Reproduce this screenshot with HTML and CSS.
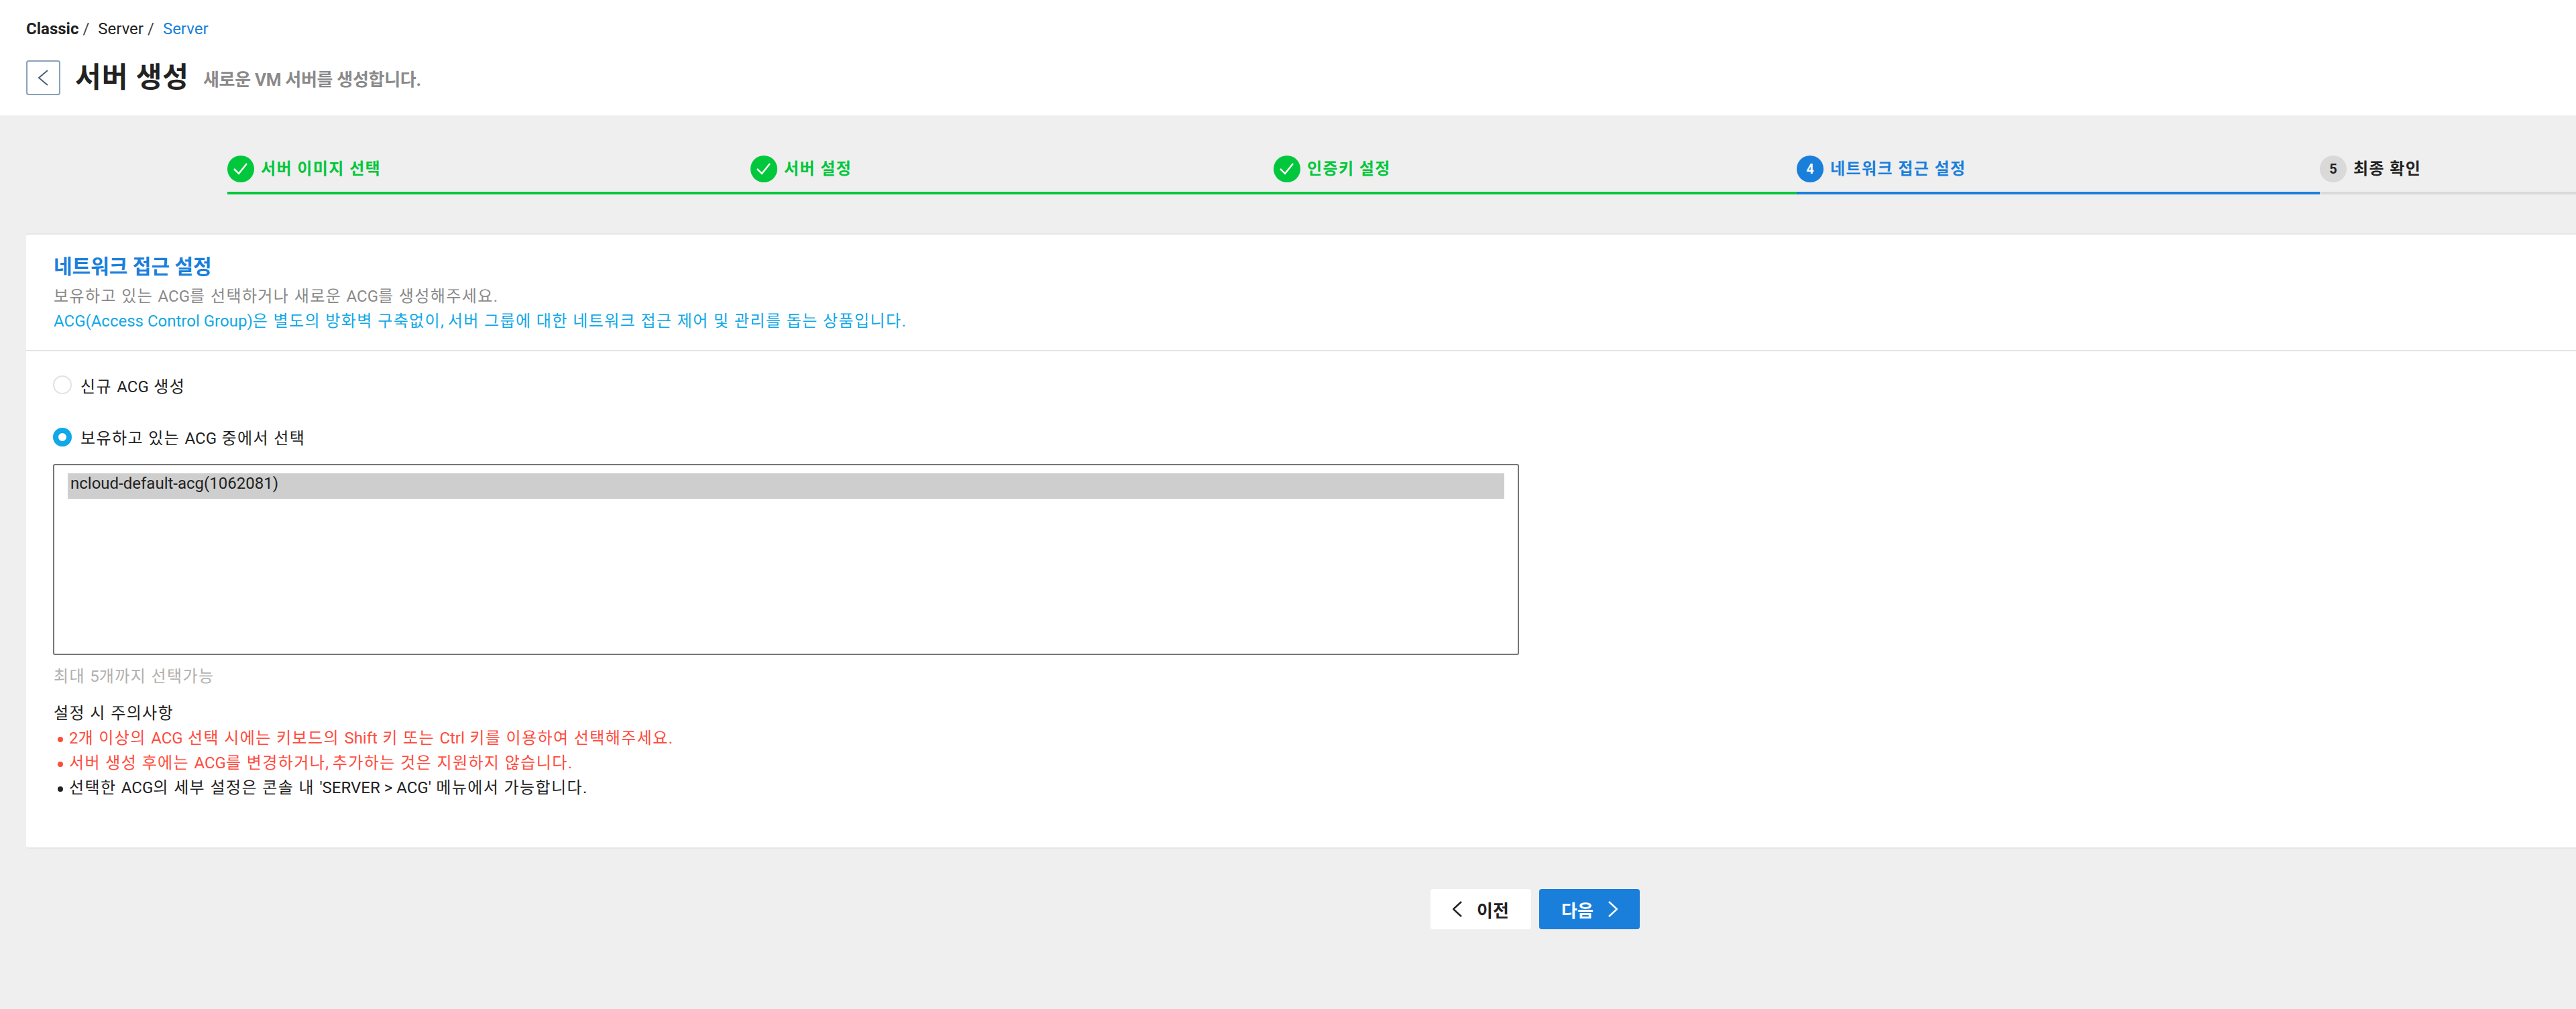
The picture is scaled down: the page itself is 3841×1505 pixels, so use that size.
FILE: index.html
```html
<!DOCTYPE html>
<html lang="ko">
<head>
<meta charset="utf-8">
<title>서버 생성</title>
<link rel="stylesheet" href="styles.css">
</head>
<body>
<header class="page-head">
  <nav class="crumbs">
    <span class="crumb crumb-root">Classic</span><span class="sep">/</span>
    <span class="crumb">Server</span><span class="sep">/</span>
    <span class="crumb crumb-now">Server</span>
  </nav>
  <div class="title-row">
    <button class="back" type="button" aria-label="뒤로">
      <svg width="16" height="24" viewBox="0 0 16 24"><path d="M14 1 1 12l13 11" class="chev-back"/></svg>
    </button>
    <h1 class="title">서버 생성</h1>
    <span class="subtitle">새로운 VM 서버를 생성합니다.</span>
  </div>
</header>
<main class="content">
  <ol class="steps">
    <li class="step step-done"><span class="dot"><svg width="22" height="18" viewBox="0 0 22 18"><path d="M1 9l7 7L20 1" class="tick"/></svg></span><span class="step-label">서버 이미지 선택</span></li>
    <li class="step step-done"><span class="dot"><svg width="22" height="18" viewBox="0 0 22 18"><path d="M1 9l7 7L20 1" class="tick"/></svg></span><span class="step-label">서버 설정</span></li>
    <li class="step step-done"><span class="dot"><svg width="22" height="18" viewBox="0 0 22 18"><path d="M1 9l7 7L20 1" class="tick"/></svg></span><span class="step-label">인증키 설정</span></li>
    <li class="step step-now"><span class="dot">4</span><span class="step-label">네트워크 접근 설정</span></li>
    <li class="step step-todo"><span class="dot">5</span><span class="step-label">최종 확인</span></li>
  </ol>
  <section class="card">
    <div class="card-head">
      <h2 class="card-title">네트워크 접근 설정</h2>
      <p class="card-desc"><span class="ko">보유하고 있는 </span>ACG<span class="ko">를 선택하거나 새로운 </span>ACG<span class="ko">를 생성해주세요</span>.</p>
      <p class="card-info">ACG(Access Control Group)<span class="ko">은 별도의 방화벽 구축없이</span>, <span class="ko">서버 그룹에 대한 네트워크 접근 제어 및 관리를 돕는 상품입니다</span>.</p>
    </div>
    <div class="card-body">
      <div class="radio-row"><span class="radio"></span><span><span class="ko">신규 </span>ACG<span class="ko"> 생성</span></span></div>
      <div class="radio-row"><span class="radio radio-on"></span><span class="radio-text"><span class="ko">보유하고 있는 </span>ACG<span class="ko"> 중에서 선택</span></span></div>
      <div class="listbox"><div class="option">ncloud-default-acg(1062081)</div></div>
      <p class="hint"><span class="ko">최대 </span>5<span class="ko">개까지 선택가능</span></p>
      <p class="notes-title"><span class="ko">설정 시 주의사항</span></p>
      <ul class="notes">
        <li class="note-red">2<span class="ko">개 이상의 </span>ACG<span class="ko"> 선택 시에는 키보드의 </span>Shift<span class="ko"> 키 또는 </span>Ctrl<span class="ko"> 키를 이용하여 선택해주세요</span>.</li>
        <li class="note-red"><span class="ko">서버 생성 후에는 </span>ACG<span class="ko">를 변경하거나</span>, <span class="ko">추가하는 것은 지원하지 않습니다</span>.</li>
        <li><span class="ko">선택한 </span>ACG<span class="ko">의 세부 설정은 콘솔 내 </span>'SERVER &gt; ACG'<span class="ko"> 메뉴에서 가능합니다</span>.</li>
      </ul>
    </div>
  </section>
  <div class="actions">
    <button class="btn btn-prev" type="button"><svg width="14" height="24" viewBox="0 0 14 24"><path d="M13 1 1 12l12 11"/></svg><span>이전</span></button>
    <button class="btn btn-next" type="button"><span>다음</span><svg width="14" height="24" viewBox="0 0 14 24"><path d="M1 1l12 11L1 23"/></svg></button>
  </div>
</main>
</body>
</html>
```
FILE: styles.css
```css
* { box-sizing: border-box; }
html, body { margin: 0; padding: 0; }
body {
  width: 3841px;
  height: 1505px;
  overflow: hidden;
  background: #efefef;
  color: #222;
  font-family: Roboto, "Noto Sans CJK KR", sans-serif;
  font-size: 24px;
}
h1, h2, p, ul, ol { margin: 0; padding: 0; }
li { list-style: none; }
.ko { letter-spacing: 1.4px; }

.page-head { height: 172px; background: #fff; padding: 28px 39px 0; }
.crumbs { display: flex; align-items: center; height: 30px; font-size: 24px; }
.crumb-root { font-weight: 700; }
.crumb-now { color: #1a7fdb; }
.sep { margin: 0 13px 0 6px; color: #444; }
.title-row { display: flex; align-items: center; margin-top: 32px; height: 52px; }
.back {
  display: flex; align-items: center; justify-content: center;
  width: 51px; height: 52px; padding: 0;
  background: #fff; border: 2px solid #8ba0b8; border-radius: 4px;
}
.chev-back { fill: none; stroke: #4f6075; stroke-width: 2; }
.title { margin-left: 22px; font-size: 42px; font-weight: 700; letter-spacing: 1px; line-height: 52px; color: #222; }
.subtitle { margin-left: 21px; font-size: 26px; font-weight: 700; letter-spacing: -.3px; color: #8a8a8a; padding-top: 1px; }

.steps { display: flex; margin: 60px 0 0 339px; height: 58px; }
.step { flex: 0 0 780px; display: flex; align-items: flex-start; gap: 10px; border-bottom: 4px solid #d9d9d9; height: 58px; font-weight: 700; font-size: 24px; }
.step:last-child { flex: 1 0 auto; }
.step-label { line-height: 40px; letter-spacing: 1.4px; }
.dot { flex: none; display: flex; align-items: center; justify-content: center; width: 40px; height: 40px; border-radius: 50%; font-size: 20px; background: #d9d9d9; }
.step-done { border-color: #00c73c; color: #00c73c; }
.step-done .dot { background: #00c73c; }
.tick { fill: none; stroke: #fff; stroke-width: 2.5; }
.step-now { border-color: #1a7fdb; color: #1a7fdb; }
.step-now .dot { background: #1a7fdb; color: #fff; }

.card { margin: 58px 0 0 39px; height: 918px; background: #fff; border-top: 2px solid #e6e6e6; border-bottom: 2px solid #e6e6e6; border-radius: 4px 0 0 4px; }
.card-head { height: 174px; padding: 27px 41px 0; border-bottom: 2px solid #e4e4e4; }
.card-title { font-size: 30px; font-weight: 700; color: #1a7fdb; line-height: 42px; }
.card-desc { margin-top: 5px; font-size: 24px; line-height: 37px; color: #8a8a8a; }
.card-info { font-size: 24px; line-height: 36px; color: #10a8e8; }
.card-body { padding: 36px 40px 0; }
.radio-row { display: flex; align-items: center; gap: 13px; height: 28px; margin-bottom: 50px; }
.radio { width: 28px; height: 28px; border-radius: 50%; border: 2px solid #e2e2e2; background: #fff; }
.radio-on { border: 8px solid #10a8e8; }
.radio-text { margin-top: -2px; }
.radio-row:nth-child(2) { margin-bottom: 26px; }
.listbox { width: 2186px; height: 285px; padding: 12px 20px; background: #fff; border: 2px solid #767676; border-radius: 3px; }
.option { height: 38px; line-height: 30px; padding-left: 4px; background: #cecece; color: #222; }
.hint { margin-top: 14px; line-height: 36px; color: #b0b0b0; padding-left: 1px; }
.notes-title { margin-top: 19px; line-height: 36px; color: #222; padding-left: 1px; }
.notes { margin-top: 1px; }
.notes li { line-height: 37px; padding-left: 7px; color: #222; }
.notes li::before { content: ""; display: inline-block; width: 8px; height: 8px; margin-right: 9px; border-radius: 50%; background: currentColor; vertical-align: middle; }
.notes .note-red { color: #ff4b3e; }

.actions { display: flex; gap: 12px; margin-top: 60px; padding-left: 2133px; }
.btn { display: flex; align-items: center; justify-content: center; gap: 22px; width: 150px; height: 60px; border: 0; border-radius: 4px; font: 700 26px Roboto, "Noto Sans CJK KR", sans-serif; }
.btn svg { fill: none; stroke: currentColor; stroke-width: 2.5; }
.btn-prev { background: #fff; color: #222; }
.btn-next { background: #1a7fdb; color: #fff; }
```
